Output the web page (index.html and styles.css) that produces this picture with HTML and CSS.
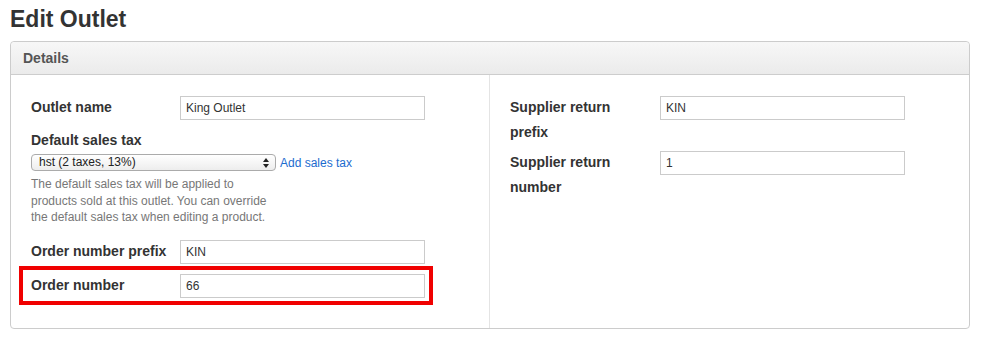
FILE: index.html
```html
<!DOCTYPE html>
<html lang="en">
<head>
<meta charset="utf-8">
<title>Edit Outlet</title>
<link rel="stylesheet" href="styles.css">
</head>
<body>
<h1 class="page-title">Edit Outlet</h1>
<section class="panel">
  <header class="panel-heading">Details</header>
  <div class="panel-body">
    <div class="col col-left">
      <div class="field">
        <label class="field-label">Outlet name</label>
        <input class="text-input" type="text" value="King Outlet">
      </div>
      <div class="field-stack">
        <label class="stack-label">Default sales tax</label>
        <div class="select-row">
          <span class="select-wrap">
            <select class="select">
              <option>hst (2 taxes, 13%)</option>
            </select>
            <svg class="select-arrows" width="6" height="10" viewBox="0 0 6 10" aria-hidden="true">
              <path d="M3 0 L6 4 L0 4 Z" fill="#222"/>
              <path d="M0 6 L6 6 L3 10 Z" fill="#222"/>
            </svg>
          </span>
          <a class="link" href="#">Add sales tax</a>
        </div>
        <p class="help">The default sales tax will be applied to products sold at this outlet. You can override the default sales tax when editing a product.</p>
      </div>
      <div class="field field-tight">
        <label class="field-label">Order number prefix</label>
        <input class="text-input" type="text" value="KIN">
      </div>
      <div class="highlight">
        <div class="field field-tight">
          <label class="field-label">Order number</label>
          <input class="text-input" type="text" value="66">
        </div>
      </div>
    </div>
    <div class="col col-right">
      <div class="field field-wide">
        <label class="field-label">Supplier return prefix</label>
        <input class="text-input" type="text" value="KIN">
      </div>
      <div class="field field-wide">
        <label class="field-label">Supplier return number</label>
        <input class="text-input" type="text" value="1">
      </div>
    </div>
  </div>
</section>
</body>
</html>
```

FILE: styles.css
```css
* { box-sizing: border-box; }

body {
  margin: 0;
  padding: 0 12px 0 10px;
  font-family: "Liberation Sans", Arial, Helvetica, sans-serif;
  color: #333;
  background: #fff;
}

.page-title {
  margin: 6px 0 9px;
  font-size: 23px;
  line-height: 26px;
  font-weight: bold;
  color: #333;
}

.panel {
  width: 960px;
  border: 1px solid #cccccc;
  border-radius: 4px;
  background: #fff;
}

.panel-heading {
  height: 33px;
  padding: 0 12px;
  line-height: 32px;
  font-size: 14px;
  font-weight: bold;
  color: #555;
  background: linear-gradient(#f7f7f7, #ebebeb);
  border-bottom: 1px solid #cdcdcd;
  border-radius: 4px 4px 0 0;
}

.panel-body {
  display: flex;
}

.col {
  padding: 20px 0 23px 20px;
}

.col-left {
  width: 479px;
  border-right: 1px solid #e4e4e4;
}

.col-right {
  flex: 1;
}

.field {
  display: flex;
  align-items: flex-start;
  margin-bottom: 8px;
}

.field-tight {
  margin-bottom: 0;
}

.field-label {
  flex: 0 0 149px;
  font-size: 14px;
  font-weight: bold;
  line-height: 25px;
  color: #333;
}

.field-wide {
  margin-bottom: 5px;
}

.field-wide .field-label {
  flex: 0 0 150px;
  padding-right: 26px;
}

.text-input {
  width: 245px;
  height: 24px;
  margin: 1px 0 0;
  padding: 0 5px;
  border: 1px solid #cbcbcb;
  border-radius: 0;
  font-family: "Liberation Sans", Arial, sans-serif;
  font-size: 12px;
  color: #333;
  background: #fff;
}

.stack-label {
  display: block;
  font-size: 14px;
  font-weight: bold;
  line-height: 25px;
  color: #333;
}

.select-row {
  display: flex;
  align-items: center;
  margin-top: 1px;
  height: 17px;
}

.select-wrap {
  position: relative;
  display: inline-block;
  width: 245px;
  height: 17px;
}

.select {
  -webkit-appearance: none;
  appearance: none;
  display: block;
  width: 245px;
  height: 17px;
  margin: 0;
  padding: 0 18px 0 7px;
  border: 1px solid #ababab;
  border-radius: 4px;
  font-family: "Liberation Sans", Arial, sans-serif;
  font-size: 12px;
  line-height: 15px;
  color: #222;
  background: linear-gradient(#ffffff, #ededed);
}

.select-arrows {
  position: absolute;
  right: 7px;
  top: 4px;
}

.link {
  margin-left: 4px;
  font-size: 12px;
  color: #1c6ccf;
  text-decoration: none;
}

.help {
  max-width: 245px;
  margin: 5px 0 13.5px;
  font-size: 12px;
  line-height: 16.5px;
  color: #777;
}

.highlight {
  margin: 2px 0 0 -12px;
  width: 414px;
  padding: 3px 4px 3px 8px;
  border: 4px solid #f00000;
}
```
